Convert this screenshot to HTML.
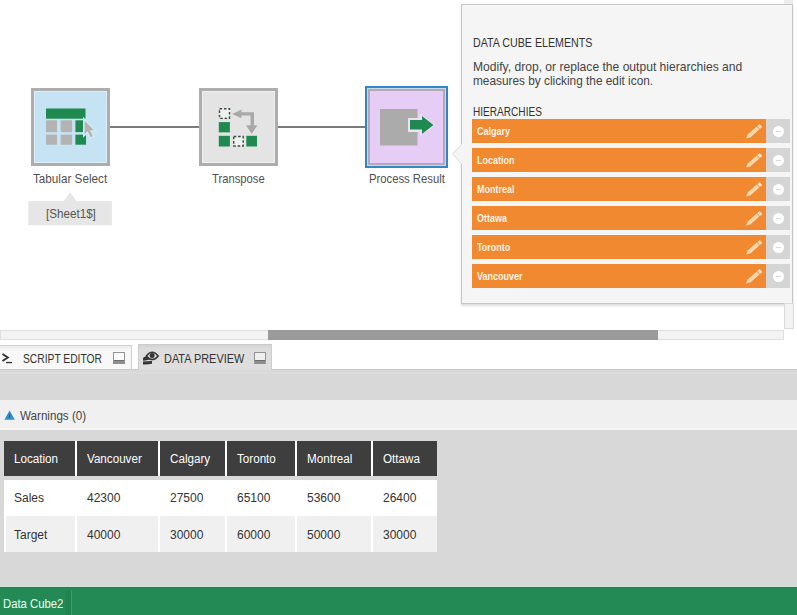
<!DOCTYPE html>
<html><head><meta charset="utf-8">
<style>
*{margin:0;padding:0;box-sizing:border-box}
html,body{width:797px;height:615px;overflow:hidden;background:#fff;font-family:"Liberation Sans",sans-serif;position:relative}
.a{position:absolute}
.t{position:absolute;white-space:nowrap;line-height:1;transform-origin:0 0}
.node{position:absolute;width:79px;height:78px;border:3px solid #a9a9a9;box-shadow:inset 0 0 0 1px rgba(255,255,255,0.4)}
.line{position:absolute;height:2px;background:#7b7b7b;top:126px}
.orow{position:absolute;left:472px;width:294px;height:24px;background:#f0892f}
.orow span{position:absolute;left:5px;top:7.7px;font-size:10px;font-weight:bold;color:#fdf1e4;line-height:1;white-space:nowrap;transform:scaleX(0.9);transform-origin:0 0}
.orow svg{position:absolute;left:0;top:0}
.grem{position:absolute;left:766px;width:24px;height:24px;background:#d5d5d5}
.grem i{position:absolute;left:6.5px;top:6.5px;width:11.5px;height:11.5px;border-radius:50%;background:#fff}
.grem i:after{content:"";position:absolute;left:3px;top:5.2px;width:5.5px;height:1px;background:#dadada}
.hdr{position:absolute;top:441px;height:35px;background:#3e3e3e;color:#fff;font-size:12px}
.c1{position:absolute;top:480px;height:36px;background:#fff;font-size:12px;color:#333}
.c2{position:absolute;top:516px;height:36px;background:#f0f0f0;font-size:12px;color:#333}
.hdr span,.c1 span,.c2 span{position:absolute;left:10px;line-height:1;white-space:nowrap}
.hdr span{top:12.2px;transform:scaleX(0.97);transform-origin:0 0}
.c1 span{top:11.8px}
.c2 span{top:13.1px}
.mini{position:absolute;width:12px;height:12px;border:1.6px solid #939393;border-bottom:3.5px solid #8f8f8f;background:#fbfbfb;box-shadow:inset 0 -1px 0 #6f6f6f}
</style></head><body>

<!-- connection lines -->
<div class="line" style="left:110px;width:89px"></div>
<div class="line" style="left:278px;width:89px"></div>

<!-- Tabular Select -->
<div class="node" style="left:31px;top:88px;background:#c6e3f3;border-color:#adadad"></div>
<svg class="a" style="left:31px;top:88px" width="79" height="78" viewBox="0 0 79 78">
  <rect x="15" y="20.5" width="39.5" height="10.2" fill="#1f8a50"/>
  <rect x="15" y="32.3" width="11" height="11.8" fill="#b3b3b3"/>
  <rect x="29.7" y="32.3" width="11.4" height="11.8" fill="#b3b3b3"/>
  <rect x="15" y="46.6" width="11" height="10.1" fill="#b3b3b3"/>
  <rect x="29.7" y="46.6" width="11.4" height="10.1" fill="#b3b3b3"/>
  <rect x="44.4" y="32.3" width="10.6" height="11.8" fill="#1f8a50"/>
  <rect x="44.4" y="46.6" width="10.6" height="10.1" fill="#1f8a50"/>
  <path d="M52.8 30.7 L52.8 48 L56.5 44.5 L59.3 50.3 L63 48.6 L60.3 43 L64.8 43 Z" fill="#b3b3b3" stroke="#d4eaf7" stroke-width="1.6" stroke-linejoin="miter"/>
</svg>
<div class="t" style="left:33px;top:172px;font-size:13px;color:#505050;transform:scaleX(0.9)">Tabular Select</div>
<!-- sheet tooltip -->
<svg class="a" style="left:28px;top:192px" width="84" height="34">
  <path d="M35.4 9.5 L42 0.3 L48.9 9.5 Z" fill="#e6e6e6"/>
  <rect x="0.4" y="9" width="83.5" height="24.2" fill="#e6e6e6"/>
</svg>
<div class="t" style="left:46px;top:207.7px;font-size:12px;color:#555;transform:scaleX(0.97)">[Sheet1$]</div>

<!-- Transpose -->
<div class="node" style="left:199px;top:88px;background:#e4e4e4;border-color:#adadad"></div>
<svg class="a" style="left:199px;top:88px" width="79" height="78" viewBox="0 0 79 78">
  <rect x="20.5" y="20.7" width="10" height="9.7" fill="#eef3ef" stroke="#3e4a42" stroke-width="1.4" stroke-dasharray="2.6 1.8"/>
  <rect x="19.8" y="34.1" width="11.1" height="10.3" fill="#1f8a50"/>
  <rect x="19.8" y="47.8" width="11.1" height="10.7" fill="#1f8a50"/>
  <rect x="34.7" y="48.5" width="9.5" height="9.5" fill="#eef3ef" stroke="#3e4a42" stroke-width="1.4" stroke-dasharray="2.6 1.8"/>
  <rect x="47.3" y="47.8" width="10.7" height="10.7" fill="#1f8a50"/>
  <path d="M33.2 25.9 L42.4 21.5 L42.4 24.2 L55 24.2 L55 37.2 L58.4 37.2 L52.7 46 L47 37.2 L51.5 37.2 L51.5 27.6 L42.4 27.6 L42.4 30.3 Z" fill="#a9a9a9"/>
</svg>
<div class="t" style="left:212px;top:172px;font-size:13px;color:#505050;transform:scaleX(0.864)">Transpose</div>

<!-- Process Result -->
<div class="a" style="left:365px;top:86px;width:83px;height:82px;border:2px solid #2e88c6;background:#c9dbe9"></div>
<div class="a" style="left:368px;top:89px;width:77px;height:76px;border:2px solid #b8a7b8;background:#e5cdf6"></div>
<svg class="a" style="left:367px;top:88px" width="79" height="78" viewBox="0 0 79 78">
  <rect x="13" y="21" width="37.5" height="36.5" fill="#ababab"/>
  <path d="M41 30 L53 30 L53 25.5 L68 37 L53 48.5 L53 44 L41 44 Z" fill="#ece2f6"/>
  <path d="M43 32 L55 32 L55 28 L66.5 37 L55 46 L55 41.5 L43 41.5 Z" fill="#1f8a50"/>
</svg>
<div class="t" style="left:369px;top:172px;font-size:13px;color:#505050;transform:scaleX(0.867)">Process Result</div>

<!-- Panel -->
<div class="a" style="left:461px;top:4px;width:332px;height:300px;background:#f5f5f5;border:1px solid #c6c6c6;box-shadow:0 2px 2px rgba(0,0,0,0.13)"></div>
<!-- pointer -->
<svg class="a" style="left:451px;top:143px" width="12" height="22">
  <path d="M11 1 L1.5 11 L11 21" fill="#f5f5f5" stroke="#dcdcdc" stroke-width="1"/>
  <rect x="10.5" y="1.5" width="2" height="19" fill="#f5f5f5"/>
</svg>
<div class="t" style="left:472.5px;top:36.8px;font-size:12px;color:#333;transform:scaleX(0.89)">DATA CUBE ELEMENTS</div>
<div class="t" style="left:472.5px;top:59.5px;font-size:13px;color:#444;line-height:14.7px;transform:scaleX(0.93)">Modify, drop, or replace the output hierarchies and<br><span style="display:inline-block;transform:scaleX(0.978);transform-origin:0 0">measures by clicking the edit icon.</span></div>
<div class="t" style="left:472.5px;top:105.7px;font-size:12px;color:#333;transform:scaleX(0.84)">HIERARCHIES</div>

<div class="orow" style="top:119px"><span>Calgary</span><svg width="294" height="24"><use href="#pen"/></svg></div><div class="grem" style="top:119px"><i></i></div>
<div class="orow" style="top:148px"><span>Location</span><svg width="294" height="24"><use href="#pen"/></svg></div><div class="grem" style="top:148px"><i></i></div>
<div class="orow" style="top:177px"><span>Montreal</span><svg width="294" height="24"><use href="#pen"/></svg></div><div class="grem" style="top:177px"><i></i></div>
<div class="orow" style="top:206px"><span>Ottawa</span><svg width="294" height="24"><use href="#pen"/></svg></div><div class="grem" style="top:206px"><i></i></div>
<div class="orow" style="top:235px"><span>Toronto</span><svg width="294" height="24"><use href="#pen"/></svg></div><div class="grem" style="top:235px"><i></i></div>
<div class="orow" style="top:264px"><span>Vancouver</span><svg width="294" height="24"><use href="#pen"/></svg></div><div class="grem" style="top:264px"><i></i></div>
<svg width="0" height="0" style="position:absolute"><defs>
  <g id="pen">
    <path d="M274 19.6 L278.3 18.5 L287.3 10.6 L284.7 7.6 L275.7 15.5 Z" fill="#fcd6ad"/>
    <path d="M285.3 7.1 L287.9 10.1 L290.3 8.0 L287.7 5.0 Z" fill="#fde0c4"/>
  </g>
</defs></svg>

<!-- scrollbars -->
<div class="a" style="left:784px;top:0;width:9px;height:4px;background:#ececec"></div>
<div class="a" style="left:0;top:330px;width:784px;height:10px;background:#f3f3f3;border:1px solid #e0e0e0"></div>
<div class="a" style="left:268px;top:330px;width:390px;height:10px;background:#9b9b9b"></div>
<div class="a" style="left:784px;top:303px;width:10px;height:26px;background:#f3f3f3;border:1px solid #dadada"></div>

<!-- tabs -->
<div class="a" style="left:-2px;top:345px;width:134px;height:24px;background:linear-gradient(#ececec,#f8f8f8 5px);border:1px solid #d2d2d2;border-bottom:none"></div>
<svg class="a" style="left:0;top:350px" width="16" height="16">
  <path d="M2.5 4 L7.8 7.5 L2.5 11" fill="none" stroke="#333" stroke-width="1.9"/>
  <rect x="6" y="11.9" width="6" height="1.3" fill="#333"/>
</svg>
<div class="t" style="left:22.5px;top:352px;font-size:13px;color:#333;transform:scaleX(0.79)">SCRIPT EDITOR</div>
<div class="mini" style="left:113px;top:352px"></div>

<div class="a" style="left:138px;top:344px;width:134px;height:26px;background:linear-gradient(#d4d4d4,#dedede 5px);border:1px solid #cdcdcd;border-bottom:none"></div>
<svg class="a" style="left:138px;top:344px" width="24" height="26">
  <path d="M5 14.2 Q5.5 12.3 9.2 12.6 L11.5 15.5 Q8 16.8 5 16.6 Z" fill="#353535"/>
  <path d="M5 17.6 Q9.5 17.4 14 17 L14 19.8 Q9.5 20.6 5 20.4 Z" fill="#353535"/>
  <path d="M8.3 12 Q14.2 4.6 20.2 12 Q14.2 19.2 8.3 12 Z" fill="#dedede" stroke="#353535" stroke-width="1.5"/>
  <circle cx="14.1" cy="11.6" r="2.5" fill="#353535"/>
</svg>
<div class="t" style="left:163.5px;top:352px;font-size:13px;color:#333;transform:scaleX(0.84)">DATA PREVIEW</div>
<div class="mini" style="left:254px;top:352px;background:#efefef"></div>

<!-- gray region -->
<div class="a" style="left:0;top:369px;width:797px;height:218px;background:#d8d8d8"></div>
<div class="a" style="left:0;top:369px;width:797px;height:1px;background:#c9c9c9"></div>
<div class="a" style="left:139px;top:369px;width:132px;height:1px;background:#dedede"></div>
<div class="a" style="left:0;top:400px;width:797px;height:28px;background:#f0f0f0"></div><div class="a" style="left:0;top:428px;width:797px;height:2px;background:#f7f7f7"></div><div class="a" style="left:0;top:372px;width:797px;height:2px;background:#dcdcdc"></div>
<svg class="a" style="left:4px;top:410px" width="12" height="11"><path d="M5.6 0.6 L10.8 9.8 L0.4 9.8 Z" fill="#2f8fca"/><rect x="5.1" y="4" width="1" height="4" fill="#1d5f88"/></svg>
<div class="t" style="left:19.5px;top:409.9px;font-size:12.5px;color:#444;transform:scaleX(0.93)">Warnings (0)</div>

<!-- table -->
<div class="a" style="left:4px;top:441px;width:433px;height:111px;background:#fff"></div>
<div class="a" style="left:4px;top:476px;width:433px;height:4px;background:#d8d8d8"></div>

<div class="hdr" style="left:4px;width:71px"><span>Location</span></div>
<div class="hdr" style="left:77px;width:81px"><span>Vancouver</span></div>
<div class="hdr" style="left:160px;width:65px"><span>Calgary</span></div>
<div class="hdr" style="left:227px;width:68px"><span>Toronto</span></div>
<div class="hdr" style="left:297px;width:74px"><span>Montreal</span></div>
<div class="hdr" style="left:373px;width:64px"><span>Ottawa</span></div>

<div class="c1" style="left:4px;width:71px"><span>Sales</span></div>
<div class="c1" style="left:77px;width:81px"><span>42300</span></div>
<div class="c1" style="left:160px;width:65px"><span>27500</span></div>
<div class="c1" style="left:227px;width:68px"><span>65100</span></div>
<div class="c1" style="left:297px;width:74px"><span>53600</span></div>
<div class="c1" style="left:373px;width:64px"><span>26400</span></div>

<div class="c2" style="left:6px;width:69px"><span style="left:8px">Target</span></div>
<div class="c2" style="left:77px;width:81px"><span>40000</span></div>
<div class="c2" style="left:160px;width:65px"><span>30000</span></div>
<div class="c2" style="left:227px;width:68px"><span>60000</span></div>
<div class="c2" style="left:297px;width:74px"><span>50000</span></div>
<div class="c2" style="left:373px;width:64px"><span>30000</span></div>

<!-- footer -->
<div class="a" style="left:0;top:587px;width:797px;height:28px;background:#238a55"></div><div class="a" style="left:0;top:586px;width:797px;height:1px;background:#d0e6d8"></div><div class="a" style="left:0;top:587px;width:797px;height:1px;background:#2a7a50"></div>
<div class="a" style="left:71px;top:591px;width:1px;height:24px;background:#3b9f68"></div><div class="a" style="left:66px;top:591px;width:5px;height:24px;background:#21844f"></div>
<div class="t" style="left:2.7px;top:596.6px;font-size:13px;color:#eafff2;transform:scaleX(0.87)">Data Cube2</div>

</body></html>
